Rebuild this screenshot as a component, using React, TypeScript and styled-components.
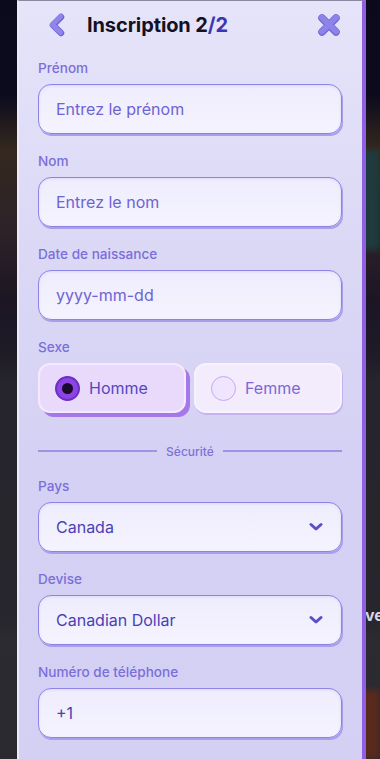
import React from 'react'
import styled, { createGlobalStyle } from 'styled-components'

const GlobalStyle = createGlobalStyle`
  html, body {
    margin: 0;
    padding: 0;
    background: #0b0a1d;
  }
  * { box-sizing: border-box; }
`

const Page = styled.div`
  position: relative;
  width: 380px;
  height: 759px;
  overflow: hidden;
  font-family: Inter, "Open Sans", sans-serif;
  background: linear-gradient(
    180deg,
    #0b0a1d 0px,
    #0c0b1e 95px,
    #34281f 150px,
    #2d2228 230px,
    #1c1624 300px,
    #1e1a26 350px,
    #26242c 380px,
    #27262d 620px,
    #2c2b32 640px,
    #2a2930 759px
  );
`

// bits of the page lying under the modal, seen at the right edge
const BehindText = styled.span`
  position: absolute;
  left: 365px;
  top: 605px;
  font-size: 16px;
  font-weight: 700;
  color: #d8d6e0;
`

const BehindArt = styled.div<{ $top: number; $h: number; $bg: string }>`
  position: absolute;
  left: 360px;
  top: ${(p) => p.$top}px;
  width: 20px;
  height: ${(p) => p.$h}px;
  background: ${(p) => p.$bg};
  filter: blur(3px);
`

const Panel = styled.div`
  position: relative;
  margin-left: 17px;
  width: 349px;
  height: 759px;
  padding: 0 20px 0 19px;
  background: linear-gradient(180deg, #e6e4f9 0%, #dcd9f6 30%, #d5d1f4 60%, #d4d0f4 100%);
  border-left: 2px solid #eceaf9;
  border-right: 4px solid #8f5fe6;
  border-top: 1px solid #8a88a0;
  display: flex;
  flex-direction: column;
`

const Header = styled.div`
  height: 47px;
  display: flex;
  align-items: center;
  padding-left: 10px;
  padding-right: 1px;
  margin-bottom: 11px;
`

const IconButton = styled.button`
  border: none;
  background: none;
  padding: 0;
  height: 24px;
  display: flex;
  align-items: center;
  justify-content: center;
`

const Title = styled.h1`
  flex: 1;
  margin: 0 0 0 21px;
  font-size: 20px;
  font-weight: 700;
  color: #141222;
  letter-spacing: -0.1px;
`

const Accent = styled.span`
  color: #3a36b4;
`

const Form = styled.div`
  display: flex;
  flex-direction: column;
  gap: 18px;
`

const Field = styled.div`
  display: flex;
  flex-direction: column;
  gap: 7px;
`

const Label = styled.label`
  height: 18px;
  line-height: 18px;
  font-size: 13.6px;
  font-weight: 500;
  color: #7a6fd9;
`

const Box = styled.div<{ $value?: boolean }>`
  height: 50px;
  border-radius: 13px;
  border: 1.5px solid #8d83e4;
  background: linear-gradient(180deg, #efedfd 0%, #f4f3fe 100%);
  box-shadow: 1px 2px 0 #a89ee9, inset 0 1px 3px rgba(120, 110, 220, 0.15);
  display: flex;
  align-items: center;
  padding: 0 18px 0 17px;
  font-size: 16px;
  color: ${(p) => (p.$value ? '#4a40b6' : '#6e63d3')};
`

const BoxText = styled.span`
  flex: 1;
`

const RadioRow = styled.div`
  display: grid;
  grid-template-columns: 1fr 1fr;
  gap: 8px;
`

const RadioCard = styled.div<{ $checked?: boolean }>`
  height: 50px;
  border-radius: 12px;
  border: 2px solid ${(p) => (p.$checked ? '#f4eaff' : '#f8f2ff')};
  background: ${(p) => (p.$checked ? '#e9dafb' : '#f3ecfd')};
  box-shadow: ${(p) => (p.$checked ? '4px 4px 0 #a577e8' : '1px 2px 0 #c7b2f0')};
  display: flex;
  align-items: center;
  gap: 9px;
  padding-left: 15px;
  font-size: 16px;
  color: ${(p) => (p.$checked ? '#5546c2' : '#7a68d6')};
`

const RadioDot = styled.span<{ $checked?: boolean }>`
  width: 25px;
  height: 25px;
  border-radius: 50%;
  display: flex;
  align-items: center;
  justify-content: center;
  background: ${(p) => (p.$checked ? '#8c45e4' : '#efe5fd')};
  border: ${(p) => (p.$checked ? '2px solid #6b2fc4' : '1.5px solid #c6a9ee')};
  &::after {
    content: '';
    display: ${(p) => (p.$checked ? 'block' : 'none')};
    width: 11px;
    height: 11px;
    border-radius: 50%;
    background: #1a0b2c;
  }
`

const Separator = styled.div`
  margin-top: 12px;
  height: 16px;
  display: flex;
  align-items: center;
  gap: 9px;
  font-size: 12px;
  font-weight: 500;
  color: #7d72d8;
  &::before,
  &::after {
    content: '';
    flex: 1;
    height: 1.5px;
    background: #9d94e6;
  }
`

const BackIcon = () => (
  <svg width="18" height="24" viewBox="0 0 18 24">
    <path d="M13 4 L5 12 L13 20" fill="none" stroke="#6f62d4" strokeWidth="6.5" strokeLinecap="round" strokeLinejoin="round" />
    <path d="M12.5 3.5 L4.5 11.5 L12.5 19.5" fill="none" stroke="#9085ea" strokeWidth="5" strokeLinecap="round" strokeLinejoin="round" />
  </svg>
)

const CloseIcon = () => (
  <svg width="24" height="24" viewBox="0 0 24 24">
    <path d="M5 5 L19 19 M19 5 L5 19" fill="none" stroke="#6f64d4" strokeWidth="7.5" strokeLinecap="round" />
    <path d="M5 4.5 L19 18.5 M19 4.5 L5 18.5" fill="none" stroke="#8d83e8" strokeWidth="6" strokeLinecap="round" />
  </svg>
)

const ChevronDown = () => (
  <svg width="14" height="10" viewBox="0 0 14 10">
    <path d="M2 2.5 L7 7 L12 2.5" fill="none" stroke="#5a4ec8" strokeWidth="3" strokeLinecap="round" strokeLinejoin="round" />
  </svg>
)

export default function App() {
  return (
    <Page>
      <GlobalStyle />
      <BehindArt $top={150} $h={100} $bg="#1f3b3d" />
      <BehindArt $top={690} $h={69} $bg="#5a2a1c" />
      <BehindText>ve</BehindText>
      <Panel>
        <Header>
          <IconButton>
            <BackIcon />
          </IconButton>
          <Title>
            Inscription 2<Accent>/2</Accent>
          </Title>
          <IconButton>
            <CloseIcon />
          </IconButton>
        </Header>

        <Form>
          <Field>
            <Label>Prénom</Label>
            <Box>Entrez le prénom</Box>
          </Field>
          <Field>
            <Label>Nom</Label>
            <Box>Entrez le nom</Box>
          </Field>
          <Field>
            <Label>Date de naissance</Label>
            <Box>yyyy-mm-dd</Box>
          </Field>
          <Field>
            <Label>Sexe</Label>
            <RadioRow>
              <RadioCard $checked>
                <RadioDot $checked />
                Homme
              </RadioCard>
              <RadioCard>
                <RadioDot />
                Femme
              </RadioCard>
            </RadioRow>
          </Field>

          <Separator>Sécurité</Separator>

          <Field>
            <Label>Pays</Label>
            <Box $value>
              <BoxText>Canada</BoxText>
              <ChevronDown />
            </Box>
          </Field>
          <Field>
            <Label>Devise</Label>
            <Box $value>
              <BoxText>Canadian Dollar</BoxText>
              <ChevronDown />
            </Box>
          </Field>
          <Field>
            <Label>Numéro de téléphone</Label>
            <Box $value>+1</Box>
          </Field>
        </Form>
      </Panel>
    </Page>
  )
}
